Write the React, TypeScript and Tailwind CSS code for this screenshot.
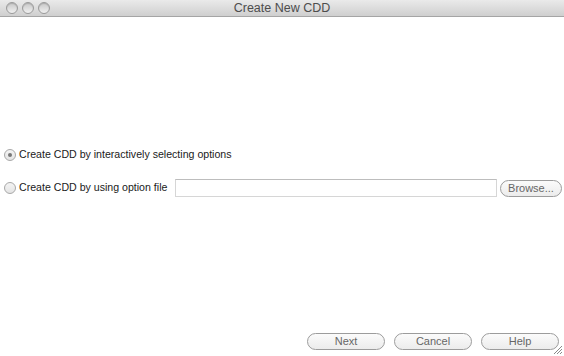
import React from "react";

function Light() {
  return (
    <span className="w-[12px] h-[12px] rounded-full border border-[#9a9a9a] bg-gradient-to-b from-[#c8c8c8] to-[#f0f0f0] shadow-[inset_0_1px_1px_rgba(0,0,0,0.15)]" />
  );
}

function Radio({ checked }: { checked?: boolean }) {
  return (
    <span className="w-[12px] h-[12px] rounded-full border border-[#a8a8a8] bg-gradient-to-b from-[#f4f4f4] to-[#e4e4e4] flex items-center justify-center shrink-0">
      {checked && <span className="w-[4px] h-[4px] rounded-full bg-[#777]" />}
    </span>
  );
}

function Button({ label, className }: { label: string; className: string }) {
  return (
    <button
      className={`h-[17px] rounded-full border border-[#9c9c9c] bg-gradient-to-b from-[#fbfbfb] to-[#ececec] text-[11px] leading-none text-[#666] shrink-0 ${className}`}
    >
      {label}
    </button>
  );
}

export default function App() {
  return (
    <div className="relative w-[564px] h-[356px] bg-white flex flex-col font-['Liberation_Sans',Arial,sans-serif] overflow-hidden">
      <div className="h-[17px] shrink-0 bg-gradient-to-b from-[#eaeaea] to-[#cfcfcf] border-b border-[#a5a5a5] flex items-center relative">
        <div className="flex gap-[4px] pl-[6px]">
          <Light />
          <Light />
          <Light />
        </div>
        <div className="absolute inset-0 flex items-center justify-center text-[12.5px] text-[#4d4d4d]">
          Create New CDD
        </div>
      </div>

      <div className="flex-1 flex flex-col pt-[132px]">
        <label className="flex items-center gap-[3px] pl-[4px] h-[12px] text-[10.6px] text-[#1a1a1a]">
          <Radio checked />
          <span>Create CDD by interactively selecting options</span>
        </label>

        <div className="flex items-center pl-[4px] pr-[2px] mt-[18px] h-[18px]">
          <Radio />
          <span className="ml-[3px] w-[156px] text-[10.6px] text-[#1a1a1a] whitespace-nowrap shrink-0">Create CDD by using option file</span>
          <div className="flex-1 h-[18px] border border-[#d6d6d6] border-t-[#bdbdbd] bg-white" />
          <Button label="Browse..." className="ml-[3px] w-[62px]" />
        </div>

        <div className="flex-1" />

        <div className="flex justify-end gap-[9px] pr-[5px] pb-[6px]">
          <Button label="Next" className="w-[78px]" />
          <Button label="Cancel" className="w-[78px]" />
          <Button label="Help" className="w-[78px]" />
        </div>
      </div>

      {/* resize grip */}
      <svg className="absolute right-[1px] bottom-[1px]" width="10" height="10" viewBox="0 0 10 10">
        <path d="M9 1 L1 9 M9 4 L4 9 M9 7 L7 9" stroke="#8a8a8a" strokeWidth="1" />
      </svg>
    </div>
  );
}
